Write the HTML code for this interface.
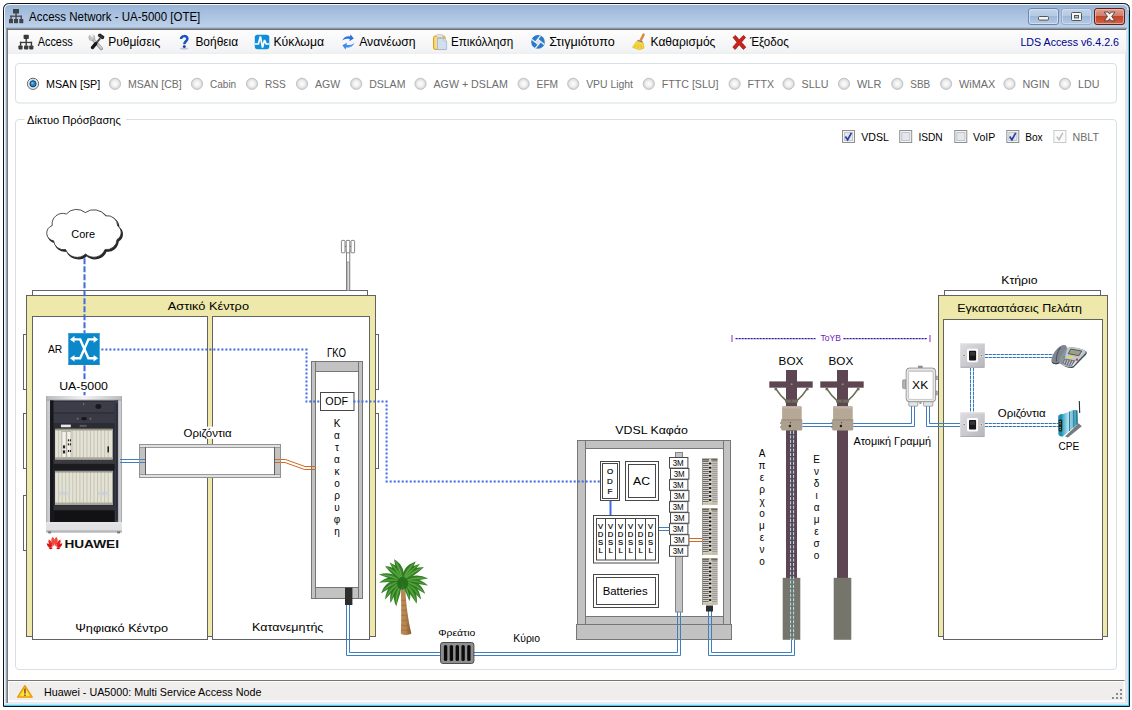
<!DOCTYPE html>
<html><head><meta charset="utf-8"><title>Access Network - UA-5000 [OTE]</title>
<style>
html,body{margin:0;padding:0;background:#fff;overflow:hidden}
body{width:1132px;height:710px;font-family:"Liberation Sans",sans-serif}
svg{display:block;position:absolute;left:0;top:0}
svg text{font-family:"Liberation Sans",sans-serif}
</style></head><body>
<svg width="1132" height="710" viewBox="0 0 1132 710">
<defs>
<linearGradient id="gTitle" x1="0" y1="0" x2="0" y2="1">
<stop offset="0" stop-color="#9ab6d8"/><stop offset="0.035" stop-color="#bdd2ea"/><stop offset="1" stop-color="#bdd2ea"/>
</linearGradient>
<linearGradient id="gTb" gradientUnits="userSpaceOnUse" x1="0" y1="4" x2="0" y2="29">
<stop offset="0" stop-color="#99b4d6"/><stop offset="1" stop-color="#bfd4ec"/>
</linearGradient>
<linearGradient id="gBtn" x1="0" y1="0" x2="0" y2="1">
<stop offset="0" stop-color="#c3d5ea"/><stop offset="0.48" stop-color="#b3c9e3"/><stop offset="0.5" stop-color="#9db8d8"/><stop offset="1" stop-color="#b5cce6"/>
</linearGradient>
<linearGradient id="gClose" x1="0" y1="0" x2="0" y2="1">
<stop offset="0" stop-color="#e3a394"/><stop offset="0.48" stop-color="#d17b68"/><stop offset="0.5" stop-color="#c1432a"/><stop offset="1" stop-color="#d0674c"/>
</linearGradient>
<linearGradient id="gMenu" x1="0" y1="0" x2="0" y2="1">
<stop offset="0" stop-color="#fdfdfd"/><stop offset="1" stop-color="#f1f2f4"/>
</linearGradient>
<radialGradient id="gRadio" cx="0.5" cy="0.5" r="0.5">
<stop offset="0" stop-color="#ffffff"/><stop offset="0.6" stop-color="#ececec"/><stop offset="1" stop-color="#cfcfcf"/>
</radialGradient>
<linearGradient id="gPlate" x1="0" y1="0" x2="1" y2="1">
<stop offset="0" stop-color="#dedee2"/><stop offset="0.5" stop-color="#cbcbd0"/><stop offset="1" stop-color="#b4b4ba"/>
</linearGradient>
<linearGradient id="gTrunk" x1="0" y1="0" x2="1" y2="0">
<stop offset="0" stop-color="#b98a58"/><stop offset="0.45" stop-color="#b5844f"/><stop offset="1" stop-color="#86562e"/>
</linearGradient>
<linearGradient id="gCpe" x1="0" y1="0" x2="1" y2="0">
<stop offset="0" stop-color="#3aa7c6"/><stop offset="0.35" stop-color="#b4e2ef"/><stop offset="1" stop-color="#2a97b8"/>
</linearGradient>
<filter id="fSoft" x="-10%" y="-10%" width="120%" height="120%"><feGaussianBlur stdDeviation="0.45"/></filter>
<linearGradient id="gCap" x1="0" y1="0" x2="1" y2="0"><stop offset="0" stop-color="#b9bcc0"/><stop offset="0.5" stop-color="#f4f4f4"/><stop offset="1" stop-color="#b9bcc0"/></linearGradient>
<filter id="fSoft2" x="-10%" y="-10%" width="120%" height="120%"><feGaussianBlur stdDeviation="0.25"/></filter>
</defs>

<!-- window frame -->
<path d="M3.5 706.5 V9.5 Q3.5 3.5 9.5 3.5 H1123.5 Q1129.5 3.5 1129.5 9.5 V706.5 Z" fill="url(#gTb)" stroke="#111" stroke-width="1"/>
<path d="M4.5 29 V10 Q4.5 4.5 10 4.5 H1122 Q1128 4.5 1128 10" fill="none" stroke="#f2f7fd" stroke-width="1"/>
<rect x="4" y="29" width="1.6" height="677" fill="#f4f8fd"/>
<rect x="5.6" y="29" width="1" height="677" fill="#a9c5ea"/>
<rect x="1126" y="29" width="2" height="677" fill="#dbe4f6"/>
<rect x="1128" y="14" width="1" height="692" fill="#45d2f7"/>
<rect x="4" y="704.6" width="1125" height="1.4" fill="#45d2f7"/>
<rect x="4" y="702.6" width="1124" height="2" fill="#e6ecf8"/>
<rect x="6" y="27.6" width="1121" height="1.4" fill="#8a98a9"/>
<rect x="6.5" y="28" width="1.5" height="675" fill="#7b7b7b"/>
<rect x="7" y="29" width="1119" height="1" fill="#6e6e6e"/>
<rect x="8" y="30" width="1118" height="673" fill="#ffffff"/>
<rect x="1125" y="30" width="1" height="673" fill="#e3e3e3"/>
<rect x="8" y="702" width="1118" height="1" fill="#e9e9e9"/>
<!-- title icon -->
<g fill="#3f4449">
<rect x="13" y="9" width="6" height="4.5"/><rect x="9" y="19" width="4" height="4.2"/><rect x="14" y="19" width="4" height="4.2"/><rect x="19.3" y="19" width="4" height="4.2"/>
<rect x="15.4" y="13" width="1.3" height="6"/><rect x="10.4" y="15.6" width="11.5" height="1.2"/><rect x="10.4" y="15.6" width="1.3" height="4"/><rect x="20.6" y="15.6" width="1.3" height="4"/>
</g>
<text x="29.0" y="20.7" font-size="12" fill="#000" textLength="171.3" lengthAdjust="spacingAndGlyphs">Access Network - UA-5000 [OTE]</text>

<g>
<rect x="1028.5" y="8.5" width="30" height="16" rx="2.5" fill="url(#gBtn)" stroke="#6f87a6"/>
<rect x="1029.5" y="9.5" width="28" height="14" rx="2" fill="none" stroke="#d7e4f3" stroke-opacity=".8"/>
<rect x="1038.5" y="16.5" width="10" height="3.6" rx="1" fill="#f4f4f4" stroke="#555" stroke-width="1"/>
<rect x="1061.5" y="8.5" width="30" height="16" rx="2.5" fill="url(#gBtn)" stroke="#8aa0bd" stroke-opacity=".7"/>
<rect x="1062.5" y="9.5" width="28" height="14" rx="2" fill="none" stroke="#d7e4f3" stroke-opacity=".6"/>
<rect x="1071.5" y="12.5" width="10" height="8" rx="1" fill="#f4f4f4" stroke="#555" stroke-width="1"/>
<rect x="1074.5" y="15.5" width="4" height="2.4" fill="#b7c9df" stroke="#555" stroke-width="1"/>
<rect x="1094.5" y="8.5" width="30" height="16" rx="2.5" fill="url(#gClose)" stroke="#5f2218"/>
<rect x="1095.5" y="9.5" width="28" height="14" rx="2" fill="none" stroke="#f0c0b4" stroke-opacity=".7"/>
<path d="M1104.2 12.1 H1108.2 L1109.6 14.1 L1111 12.1 H1115 L1111.7 16.4 L1115 20.8 H1111 L1109.6 18.7 L1108.2 20.8 H1104.2 L1107.5 16.4 Z" fill="#f7f7f7" stroke="#4d3c3c" stroke-width=".9" stroke-linejoin="round"/>
</g>
<rect x="8" y="30" width="1118" height="22.6" fill="url(#gMenu)"/>
<rect x="8" y="52.6" width="1118" height="1" fill="#e3e5e8"/>
<g fill="#3b3b3b">
<rect x="23.6" y="34.8" width="5.2" height="4.2" rx=".8"/><rect x="18.4" y="45.4" width="4.2" height="4" rx=".8"/><rect x="24" y="45.4" width="4.4" height="4" rx=".8"/><rect x="29.2" y="45.4" width="4.2" height="4" rx=".8"/>
<rect x="25.5" y="38.6" width="1.4" height="7"/><rect x="19.9" y="41.8" width="12.2" height="1.3"/><rect x="19.9" y="41.8" width="1.4" height="4"/><rect x="30.7" y="41.8" width="1.4" height="4"/>
</g>
<text x="37.7" y="45.8" font-size="12" fill="#000" textLength="35.1" lengthAdjust="spacingAndGlyphs">Access</text>
<g>
<path d="M93.2 39.6 L101.4 48.6" stroke="#8f8f8f" stroke-width="3.2" stroke-linecap="round"/>
<path d="M93 39.2 L101.2 48.2" stroke="#c9c9c9" stroke-width="2" stroke-linecap="round"/>
<circle cx="91.8" cy="37.6" r="3" fill="#c4c4c4" stroke="#9a9a9a" stroke-width=".6"/>
<path d="M89.2 34.4 L92.2 37.4 L93.8 35.8 L91.6 33.4 Z" fill="#f6f6f6"/>
<path d="M99.8 38.8 L95.6 43.8" stroke="#4a4a4a" stroke-width="1.9" stroke-linecap="round"/>
<path d="M95.8 43.6 L92.4 47.6" stroke="#151515" stroke-width="3.2" stroke-linecap="round"/>
<path d="M98.4 34 L100.2 33.6 L104.4 36.6 L103.8 38.8 L102 39.2 L97.8 36 Z" fill="#1e1e1e"/>
<path d="M98.6 34.6 L103.2 38" stroke="#5a5a5a" stroke-width=".7"/>
</g>
<text x="108.2" y="45.8" font-size="12" fill="#000" textLength="52.0" lengthAdjust="spacingAndGlyphs">Ρυθμίσεις</text>
<g><ellipse cx="184.2" cy="48.6" rx="4.2" ry="1.1" fill="#8fa3c2" opacity=".55"/>
<path d="M181 39 C180.8 35.4 187.6 35 187.4 38.8 C187.2 41.2 184.4 41.4 184.3 44.2" fill="none" stroke="#1b52c0" stroke-width="2.5" stroke-linecap="butt"/>
<circle cx="184.3" cy="46.6" r="1.45" fill="#143c9c"/></g>
<text x="195.4" y="45.8" font-size="12" fill="#000" textLength="42.8" lengthAdjust="spacingAndGlyphs">Βοήθεια</text>
<g><rect x="254.8" y="34.7" width="14.5" height="14.5" rx="2.6" fill="#0e8fd9"/>
<clipPath id="cCirc"><rect x="254.8" y="34.7" width="14.5" height="14.5" rx="2.6"/></clipPath><path clip-path="url(#cCirc)" d="M254.8 44 H258.4 L260.4 36.4 L262.5 47.6 L264.5 40 L266.2 44 H269.3" fill="none" stroke="#fff" stroke-width="1.7" stroke-linejoin="miter" stroke-miterlimit="3"/></g>
<text x="273.4" y="45.8" font-size="12" fill="#000" textLength="50.7" lengthAdjust="spacingAndGlyphs">Κύκλωμα</text>
<g>
<path d="M342.2 40.6 C343.6 37 347 35.8 350.2 36.4 L350.4 34.2 L353.8 38.6 L349.4 41.2 L349.8 39 C347 38.4 344.4 39 342.2 40.6 Z" fill="#2c6fe0"/>
<path d="M354 43.2 C352.6 46.8 349.2 48 346 47.4 L345.6 49.8 L342.4 45.2 L347 42.8 L346.6 45 C349.2 45.4 351.8 44.8 354 43.2 Z" fill="#3f8af0"/>
<path d="M353.6 43.6 C352.4 46 350.4 46.8 348.6 47" stroke="#6cb4fa" stroke-width="1" fill="none"/>
</g>
<text x="359.2" y="45.8" font-size="12" fill="#000" textLength="56.4" lengthAdjust="spacingAndGlyphs">Ανανέωση</text>
<g><rect x="433.5" y="36" width="11.6" height="13.4" rx="1.6" fill="#f3c53c" stroke="#d49a1c" stroke-width=".9"/>
<rect x="434.4" y="36.8" width="3" height="11.8" fill="#fbe28a" opacity=".8"/>
<rect x="436.4" y="34.6" width="6.6" height="3" rx="1.2" fill="#e3e3e3" stroke="#b5b5b5" stroke-width=".6"/>
<path d="M437.5 38.4 H444 L446.6 41 V49.6 H437.5 Z" fill="#cfdef0" stroke="#9db4d2" stroke-width=".8"/>
<path d="M444 38.4 V41 H446.6" fill="#eef4fb" stroke="#9db4d2" stroke-width=".6"/></g>
<text x="451.0" y="45.8" font-size="12" fill="#000" textLength="62.3" lengthAdjust="spacingAndGlyphs">Επικόλληση</text>
<g><clipPath id="cSnap"><circle cx="538" cy="41.9" r="6.8"/></clipPath>
<circle cx="538" cy="41.9" r="6.8" fill="#2b7bc9"/>
<g clip-path="url(#cSnap)" transform="rotate(-6 538 41.9)">
<path d="M538 39.2 L540.7 41.9 L538 44.6 L535.3 41.9 Z" fill="#c2e2fb"/>
<path d="M535.3 41.9 L544.5 32.7 M538 39.2 L547.2 48.4 M540.7 41.9 L531.5 51.1 M538 44.6 L528.8 35.4" stroke="#f1f1f1" stroke-width="1.25" fill="none"/>
</g></g>
<text x="549.2" y="45.8" font-size="12" fill="#000" textLength="65.5" lengthAdjust="spacingAndGlyphs">Στιγμιότυπο</text>
<g><path d="M643.6 34.6 L640.2 41.4" stroke="#cf9140" stroke-width="2.5" stroke-linecap="round"/>
<path d="M637.8 40.2 L642.6 41.8 C643.6 44 644 46 644 48.2 L639.4 49.8 L632.6 47.4 C634 44.6 635.8 42.2 637.8 40.2 Z" fill="#f3d63e" stroke="#d9b628" stroke-width=".6"/>
<path d="M636 45 l-1.4 2.6 M638.6 44.4 l-.8 4 M641 45 l.2 3.8" stroke="#d9b628" stroke-width=".6"/>
<path d="M637.6 40.4 L642.6 42" stroke="#8a63b8" stroke-width="1.1"/></g>
<text x="650.5" y="45.8" font-size="12" fill="#000" textLength="64.9" lengthAdjust="spacingAndGlyphs">Καθαρισμός</text>
<path d="M733 37.4 L735.4 35.4 L739.2 39.8 L743.4 35.4 L745.6 37.4 L741.4 42.2 L745.8 47.2 L743.4 49.4 L739.2 44.8 L735.2 49.4 L732.8 47.2 L737 42.2 Z" fill="#c9231b" stroke="#8e130f" stroke-width=".7"/>
<text x="749.9" y="45.8" font-size="12" fill="#000" textLength="38.9" lengthAdjust="spacingAndGlyphs">Έξοδος</text>
<text x="1020.4" y="45.6" font-size="11" fill="#00008b" textLength="98.6" lengthAdjust="spacingAndGlyphs">LDS Access v6.4.2.6</text>
<rect x="15.5" y="63.5" width="1101" height="39.5" rx="3.5" fill="none" stroke="#d5dfe5"/>
<path d="M24.5 119.5 H19 Q15.5 119.5 15.5 123 V666 Q15.5 669.5 19 669.5 H1113 Q1116.5 669.5 1116.5 666 V123 Q1116.5 119.5 1113 119.5 H126" fill="none" stroke="#d5dfe5"/>
<text x="27.1" y="123.7" font-size="11" fill="#000" textLength="93.7" lengthAdjust="spacingAndGlyphs">Δίκτυο Πρόσβασης</text>
<circle cx="33" cy="83.8" r="5.6" fill="#fdfdfd" stroke="#5c6670" stroke-width="1"/><circle cx="33" cy="83.8" r="4.4" fill="#f1f3f5" stroke="#c3c9d0" stroke-width=".6"/><circle cx="33" cy="83.8" r="3.1" fill="#1f86d2" stroke="#17395c" stroke-width="1"/><circle cx="32.4" cy="83.1" r="1.2" fill="#62c4f4"/>
<text x="46.0" y="88.2" font-size="11" fill="#000" textLength="54.2" lengthAdjust="spacingAndGlyphs">MSAN [SP]</text>
<circle cx="115" cy="83.8" r="5.6" fill="url(#gRadio)" stroke="#c2c5c8" stroke-width="1"/>
<text x="128.0" y="88.2" font-size="11" fill="#6d6d6d" textLength="53.8" lengthAdjust="spacingAndGlyphs">MSAN [CB]</text>
<circle cx="197" cy="83.8" r="5.6" fill="url(#gRadio)" stroke="#c2c5c8" stroke-width="1"/>
<text x="210.0" y="88.2" font-size="11" fill="#6d6d6d" textLength="26.2" lengthAdjust="spacingAndGlyphs">Cabin</text>
<circle cx="252" cy="83.8" r="5.6" fill="url(#gRadio)" stroke="#c2c5c8" stroke-width="1"/>
<text x="265.0" y="88.2" font-size="11" fill="#6d6d6d" textLength="20.8" lengthAdjust="spacingAndGlyphs">RSS</text>
<circle cx="302" cy="83.8" r="5.6" fill="url(#gRadio)" stroke="#c2c5c8" stroke-width="1"/>
<text x="315.0" y="88.2" font-size="11" fill="#6d6d6d" textLength="25.2" lengthAdjust="spacingAndGlyphs">AGW</text>
<circle cx="356.2" cy="83.8" r="5.6" fill="url(#gRadio)" stroke="#c2c5c8" stroke-width="1"/>
<text x="369.2" y="88.2" font-size="11" fill="#6d6d6d" textLength="36.2" lengthAdjust="spacingAndGlyphs">DSLAM</text>
<circle cx="420.5" cy="83.8" r="5.6" fill="url(#gRadio)" stroke="#c2c5c8" stroke-width="1"/>
<text x="433.5" y="88.2" font-size="11" fill="#6d6d6d" textLength="74.3" lengthAdjust="spacingAndGlyphs">AGW + DSLAM</text>
<circle cx="523.6" cy="83.8" r="5.6" fill="url(#gRadio)" stroke="#c2c5c8" stroke-width="1"/>
<text x="536.6" y="88.2" font-size="11" fill="#6d6d6d" textLength="21.5" lengthAdjust="spacingAndGlyphs">EFM</text>
<circle cx="573.2" cy="83.8" r="5.6" fill="url(#gRadio)" stroke="#c2c5c8" stroke-width="1"/>
<text x="586.2" y="88.2" font-size="11" fill="#6d6d6d" textLength="46.8" lengthAdjust="spacingAndGlyphs">VPU Light</text>
<circle cx="648.8" cy="83.8" r="5.6" fill="url(#gRadio)" stroke="#c2c5c8" stroke-width="1"/>
<text x="661.8" y="88.2" font-size="11" fill="#6d6d6d" textLength="56.7" lengthAdjust="spacingAndGlyphs">FTTC [SLU]</text>
<circle cx="734.6" cy="83.8" r="5.6" fill="url(#gRadio)" stroke="#c2c5c8" stroke-width="1"/>
<text x="747.6" y="88.2" font-size="11" fill="#6d6d6d" textLength="26.5" lengthAdjust="spacingAndGlyphs">FTTX</text>
<circle cx="788.6" cy="83.8" r="5.6" fill="url(#gRadio)" stroke="#c2c5c8" stroke-width="1"/>
<text x="801.6" y="88.2" font-size="11" fill="#6d6d6d" textLength="26.8" lengthAdjust="spacingAndGlyphs">SLLU</text>
<circle cx="844" cy="83.8" r="5.6" fill="url(#gRadio)" stroke="#c2c5c8" stroke-width="1"/>
<text x="857.0" y="88.2" font-size="11" fill="#6d6d6d" textLength="24.3" lengthAdjust="spacingAndGlyphs">WLR</text>
<circle cx="897.3" cy="83.8" r="5.6" fill="url(#gRadio)" stroke="#c2c5c8" stroke-width="1"/>
<text x="910.3" y="88.2" font-size="11" fill="#6d6d6d" textLength="19.9" lengthAdjust="spacingAndGlyphs">SBB</text>
<circle cx="946.1" cy="83.8" r="5.6" fill="url(#gRadio)" stroke="#c2c5c8" stroke-width="1"/>
<text x="959.1" y="88.2" font-size="11" fill="#6d6d6d" textLength="36.3" lengthAdjust="spacingAndGlyphs">WiMAX</text>
<circle cx="1009.5" cy="83.8" r="5.6" fill="url(#gRadio)" stroke="#c2c5c8" stroke-width="1"/>
<text x="1022.5" y="88.2" font-size="11" fill="#6d6d6d" textLength="26.9" lengthAdjust="spacingAndGlyphs">NGIN</text>
<circle cx="1065" cy="83.8" r="5.6" fill="url(#gRadio)" stroke="#c2c5c8" stroke-width="1"/>
<text x="1078.0" y="88.2" font-size="11" fill="#6d6d6d" textLength="21.4" lengthAdjust="spacingAndGlyphs">LDU</text>
<rect x="842.5" y="130.5" width="12" height="12" fill="#f4f4f4" stroke="#8e8f8f"/><rect x="844.5" y="132.5" width="8" height="8" fill="#e3e6ea" stroke="#c1c6cc"/>
<path d="M845.4 136.6 l2.2 3.2 l3.8 -7" fill="none" stroke="#2a3fa0" stroke-width="1.7"/>
<text x="861.3" y="141.0" font-size="11" fill="#000" textLength="27.7" lengthAdjust="spacingAndGlyphs">VDSL</text>
<rect x="899.7" y="130.5" width="12" height="12" fill="#f4f4f4" stroke="#8e8f8f"/><rect x="901.7" y="132.5" width="8" height="8" fill="#e3e6ea" stroke="#c1c6cc"/>
<text x="918.4" y="141.0" font-size="11" fill="#000" textLength="24.3" lengthAdjust="spacingAndGlyphs">ISDN</text>
<rect x="954.8" y="130.5" width="12" height="12" fill="#f4f4f4" stroke="#8e8f8f"/><rect x="956.8" y="132.5" width="8" height="8" fill="#e3e6ea" stroke="#c1c6cc"/>
<text x="973.0" y="141.0" font-size="11" fill="#000" textLength="22.3" lengthAdjust="spacingAndGlyphs">VoIP</text>
<rect x="1006.8" y="130.5" width="12" height="12" fill="#f4f4f4" stroke="#8e8f8f"/><rect x="1008.8" y="132.5" width="8" height="8" fill="#e3e6ea" stroke="#c1c6cc"/>
<path d="M1009.6999999999999 136.6 l2.2 3.2 l3.8 -7" fill="none" stroke="#2a3fa0" stroke-width="1.7"/>
<text x="1025.2" y="141.0" font-size="11" fill="#000" textLength="17.5" lengthAdjust="spacingAndGlyphs">Box</text>
<rect x="1053.9" y="130.5" width="12" height="12" fill="#fafafa" stroke="#c9cacb"/>
<path d="M1056.8000000000002 136.6 l2.2 3.2 l3.8 -7" fill="none" stroke="#b9bdc2" stroke-width="1.5"/>
<text x="1072.6" y="141.0" font-size="11" fill="#6d6d6d" textLength="26.4" lengthAdjust="spacingAndGlyphs">NBLT</text>
<rect x="8" y="680" width="1116.5" height="1" fill="#767676"/>
<rect x="9" y="682" width="1114.5" height="18.4" fill="#f0eded"/>
<path d="M24.9 685.6 L32.2 697.2 H17.6 Z" fill="#f7c61c" stroke="#ec9a0c" stroke-width="1.3" stroke-linejoin="round"/>
<path d="M24.9 688 L29.6 695.8 H20.2 Z" fill="#fdee5a" opacity=".8"/>
<rect x="24.2" y="688.6" width="1.5" height="5" fill="#7a4a1a"/><rect x="24.2" y="694.4" width="1.5" height="1.5" fill="#7a4a1a"/>
<g fill="#8b8b8b"><rect x="1120" y="689" width="2" height="2"/><rect x="1116" y="693" width="2" height="2"/><rect x="1120" y="693" width="2" height="2"/><rect x="1112" y="697" width="2" height="2"/><rect x="1116" y="697" width="2" height="2"/><rect x="1120" y="697" width="2" height="2"/></g>
<text x="44.0" y="696.0" font-size="11" fill="#000" textLength="217.4" lengthAdjust="spacingAndGlyphs">Huawei - UA5000: Multi Service Access Node</text>

<!-- central office -->
<rect x="32.5" y="290.5" width="335" height="6" fill="#fff" stroke="#626262"/>
<g fill="#fff" stroke="#626262">
<rect x="23.5" y="334.5" width="3" height="55"/><rect x="23.5" y="413.5" width="3" height="55"/><rect x="23.5" y="495.5" width="3" height="55"/>
<rect x="375.5" y="334.5" width="3" height="55"/><rect x="375.5" y="413.5" width="3" height="55"/>
</g>
<rect x="26.5" y="295.5" width="349" height="341" fill="#eee8aa" stroke="#626262"/>
<rect x="32.5" y="316.5" width="175" height="323" fill="#fff" stroke="#626262"/>
<rect x="212.5" y="316.5" width="157" height="323" fill="#fff" stroke="#626262"/>
<text x="167.8" y="309.5" font-size="11" fill="#000" textLength="81.2" lengthAdjust="spacingAndGlyphs">Αστικό Κέντρο</text>
<text x="75.2" y="632.0" font-size="11" fill="#000" textLength="92.8" lengthAdjust="spacingAndGlyphs">Ψηφιακό Κέντρο</text>
<text x="252.0" y="631.0" font-size="11" fill="#000" textLength="71.4" lengthAdjust="spacingAndGlyphs">Κατανεμητής</text>
<g fill="#fff" stroke="#666" stroke-width=".8">
<rect x="346.4" y="250" width="3.4" height="40.5"/><rect x="347.2" y="262" width="1.8" height="28.5" stroke-width=".5"/>
<rect x="341.4" y="240.4" width="3.6" height="12.4" rx=".8"/><rect x="346.2" y="240.4" width="3.6" height="12.4" rx=".8"/><rect x="351" y="240.4" width="3.6" height="12.4" rx=".8"/>
<path d="M345 246.5 h1.2 M349.8 246.5 h1.2" />
</g>
<g>
<path d="M85.3 212.6 A14.5 14.5 0 0 1 105.7 215.8 A10.4 10.4 0 0 1 117.7 226 A8 8 0 0 1 117 239.6 A10.4 10.4 0 0 1 105 249.5 A12 12 0 0 1 85.6 254 A12.4 12.4 0 0 1 65.6 249.5 A10 10 0 0 1 53.6 240.8 A7.8 7.8 0 0 1 52.2 225.6 A10.6 10.6 0 0 1 66.3 214 A13.6 13.6 0 0 1 85.3 212.6 Z" fill="#000" stroke="#000" stroke-width="1.2" opacity=".85" transform="translate(1.2,1.5)"/>
<path d="M85.3 212.6 A14.5 14.5 0 0 1 105.7 215.8 A10.4 10.4 0 0 1 117.7 226 A8 8 0 0 1 117 239.6 A10.4 10.4 0 0 1 105 249.5 A12 12 0 0 1 85.6 254 A12.4 12.4 0 0 1 65.6 249.5 A10 10 0 0 1 53.6 240.8 A7.8 7.8 0 0 1 52.2 225.6 A10.6 10.6 0 0 1 66.3 214 A13.6 13.6 0 0 1 85.3 212.6 Z" fill="#fff" stroke="#3a3a3a" stroke-width=".9"/>
</g>
<text x="71.3" y="238.0" font-size="10" fill="#000" textLength="23.7" lengthAdjust="spacingAndGlyphs">Core</text>
<path d="M84.5 258.3 V333 M84.5 365.3 V396" stroke="#4169e1" stroke-width="2" stroke-dasharray="6 2" fill="none"/>
<rect x="57" y="379.6" width="54" height="12.4" fill="#fff"/>
<g>
<rect x="68.3" y="333" width="31.4" height="31.7" fill="#0a88c9"/>
<rect x="68.3" y="333" width="31.4" height="1" fill="#2f9fd8"/><rect x="68.3" y="363.7" width="31.4" height="1" fill="#0a7ab6"/>
<g fill="none" stroke="#fff" stroke-width="2.4" stroke-linejoin="miter">
<path d="M73.6 339.4 H80.2 L88.4 358.2 H94.6"/>
<path d="M73.6 358.2 H80.2 L88.4 339.4 H94.6"/>
</g>
<g fill="#fff"><path d="M69.9 339.4 l4.6 -3.3 v6.6z M69.9 358.2 l4.6 -3.3 v6.6z M98.2 339.4 l-4.6 -3.3 v6.6z M98.2 358.2 l-4.6 -3.3 v6.6z"/></g>
</g>
<text x="48.0" y="353.0" font-size="10" fill="#000" textLength="14.3" lengthAdjust="spacingAndGlyphs">AR</text>
<text x="59.2" y="390.0" font-size="11" fill="#000" textLength="48.8" lengthAdjust="spacingAndGlyphs">UA-5000</text>
<g transform="translate(46.2,396) scale(0.9844,1.0074) translate(-46,-397)">
<rect x="46" y="397" width="77" height="136" fill="#c9ccd0"/>
<rect x="46" y="397" width="77" height="4.2" fill="url(#gCap)"/><rect x="46" y="400.6" width="77" height=".8" fill="#9a9a9a"/>
<rect x="46" y="397" width="1" height="126" fill="#aaa"/><rect x="122" y="397" width="1" height="126" fill="#aaa"/>
<rect x="50" y="401.4" width="69" height="121" fill="#2b2c35"/>
<rect x="50" y="401.4" width="3.4" height="121" fill="#15151a"/><rect x="115.6" y="401.4" width="3.4" height="121" fill="#3c3f4c"/>
<g fill="#1a1a1d"><rect x="50.6" y="404" width="1.6" height="116" opacity=".5"/><rect x="116.8" y="404" width="1.6" height="116" opacity=".5"/></g>
<rect x="53.5" y="402.6" width="62" height="10.6" fill="#3c3d49"/><ellipse cx="99" cy="407.4" rx="3" ry="2.4" fill="#17171c"/><circle cx="84" cy="405" r=".8" fill="#888"/>
<rect x="53.5" y="414.4" width="62" height="9.4" fill="#393a46"/><rect x="82" y="418" width="5" height="3" fill="#18181c"/><circle cx="78" cy="419.5" r=".9" fill="#777"/><circle cx="91" cy="419.5" r=".9" fill="#777"/>
<rect x="53.5" y="424.8" width="62" height="4" fill="#2c2c33"/><rect x="61" y="425.4" width="10" height="2.6" fill="#e8e8e8"/><rect x="80" y="425.6" width="7" height="2.2" fill="#55555c"/>
<rect x="55" y="429.6" width="58.5" height="30.4" fill="#e4e2d4"/>
<g stroke="#b9b7a6" stroke-width=".7"><path d="M58.6 429.6v30.4M62.2 429.6v30.4M65.8 429.6v30.4M69.4 429.6v30.4M73 429.6v30.4M76.6 429.6v30.4M80.2 429.6v30.4M83.8 429.6v30.4M87.4 429.6v30.4M91 429.6v30.4M94.6 429.6v30.4M98.2 429.6v30.4M101.8 429.6v30.4M105.4 429.6v30.4M109 429.6v30.4"/></g>
<rect x="62" y="432" width="4.2" height="26" fill="#f3f2ea" stroke="#8e8c7e" stroke-width=".5"/><rect x="67" y="432" width="4.2" height="26" fill="#f3f2ea" stroke="#8e8c7e" stroke-width=".5"/>
<g fill="#222"><rect x="63" y="446" width="2.2" height="3"/><rect x="63" y="451" width="2.2" height="3"/><rect x="68" y="440" width="1.2" height="2"/><rect x="70" y="440" width="1.2" height="2"/><rect x="68" y="444" width="1.2" height="2"/><rect x="70" y="444" width="1.2" height="2"/><rect x="68" y="450.6" width="1.2" height="2"/><rect x="70" y="450.6" width="1.2" height="2"/><rect x="108.2" y="447" width="1.6" height="6"/></g>
<rect x="55" y="429.6" width="58.5" height="1.6" fill="#9a988c"/><rect x="55" y="457.8" width="58.5" height="2.2" fill="#a9a79a"/>
<rect x="53.5" y="460.6" width="62" height="3.6" fill="#3a3a40"/><rect x="53.5" y="464.6" width="62" height="5.8" fill="#1b1b1f"/>
<rect x="55" y="471.4" width="58.5" height="33.8" fill="#e4e2d4"/>
<g stroke="#b9b7a6" stroke-width=".7"><path d="M58.6 471.4v33.8M62.2 471.4v33.8M65.8 471.4v33.8M69.4 471.4v33.8M73 471.4v33.8M76.6 471.4v33.8M80.2 471.4v33.8M83.8 471.4v33.8M87.4 471.4v33.8M91 471.4v33.8M94.6 471.4v33.8M98.2 471.4v33.8M101.8 471.4v33.8M105.4 471.4v33.8M109 471.4v33.8"/></g>
<g fill="#c9d3e6"><rect x="59.4" y="492" width="2" height="3.4"/><rect x="63" y="492" width="2" height="3.4"/><rect x="66.6" y="492" width="2" height="3.4"/><rect x="99" y="492" width="2" height="3.4"/><rect x="102.6" y="492" width="2" height="3.4"/><rect x="106.2" y="492" width="2" height="3.4"/></g>
<rect x="55" y="471.4" width="58.5" height="1.6" fill="#9a988c"/><rect x="55" y="502.8" width="58.5" height="2.4" fill="#a9a79a"/>
<rect x="53.5" y="506" width="62" height="4" fill="#34343a"/><rect x="53.5" y="510.6" width="62" height="11.4" fill="#121215"/>
<rect x="46" y="522.4" width="77" height="9" fill="#e1e1e3"/><rect x="46" y="522.4" width="77" height="1" fill="#f0f0f0"/><rect x="46" y="530.6" width="77" height=".9" fill="#9c9c9c"/>
<rect x="48" y="531.4" width="3" height="2" fill="#777"/><rect x="118" y="531.4" width="3" height="2" fill="#777"/>
</g>
<g filter="url(#fSoft2)">
<path d="M53.90 546.20 Q56.45 540.62 52.70 536.80 Q49.03 541.57 53.90 546.20Z" fill="#f2483a"/><path d="M55.10 546.20 Q59.97 541.57 56.30 536.80 Q52.55 540.62 55.10 546.20Z" fill="#f2483a"/><path d="M52.90 546.80 Q52.76 541.50 48.70 539.40 Q47.21 544.65 52.90 546.80Z" fill="#ee2020"/><path d="M56.10 546.80 Q61.79 544.65 60.30 539.40 Q56.24 541.50 56.10 546.80Z" fill="#ee2020"/><path d="M52.30 547.50 Q50.41 543.68 46.80 543.20 Q47.03 548.01 52.30 547.50Z" fill="#dc1010"/><path d="M56.70 547.50 Q61.97 548.01 62.20 543.20 Q58.59 543.68 56.70 547.50Z" fill="#dc1010"/><path d="M52.70 548.30 Q50.50 546.82 48.40 547.70 Q50.01 550.31 52.70 548.30Z" fill="#bb0d0d"/><path d="M56.30 548.30 Q58.99 550.31 60.60 547.70 Q58.50 546.82 56.30 548.30Z" fill="#bb0d0d"/>
</g>
<text x="64.4" y="547.8" font-size="10.6" fill="#111" textLength="54.6" lengthAdjust="spacingAndGlyphs" font-weight="bold">HUAWEI</text>
<g>
<path d="M120 459.5 H146 M120 462.5 H146" stroke="#3f7fbf" stroke-width="1" fill="none"/>
<path d="M275 459.5 H285.5 L305 466.5 H315 M275 462.5 H285 L304.5 469.5 H315" stroke="#d2691e" stroke-width="1" fill="none"/>
<rect x="139.5" y="444.5" width="141" height="33" fill="#e0e0e0" stroke="#929292"/>
<rect x="140" y="447.5" width="5.5" height="27" fill="#c2c2c2"/><rect x="274.5" y="447.5" width="5.5" height="27" fill="#c2c2c2"/>
<rect x="145.5" y="447.5" width="129" height="27" fill="#fff" stroke="#9a9a9a"/>
<path d="M140 447.5 H145.5 M274.5 447.5 H280 M140 474.5 H145.5 M274.5 474.5 H280" stroke="#9a9a9a" fill="none"/>
<path d="M145.5 447 V475 M274.5 447 V475" stroke="#5e5e5e" stroke-width="1"/>
<path d="M140 459.5 H145 M140 462.5 H145" stroke="#3f7fbf" stroke-width="1" fill="none"/>
<path d="M275 459.5 H280 M275 462.5 H280" stroke="#d2691e" stroke-width="1" fill="none"/>
</g>
<rect x="181" y="426.6" width="54" height="12.2" fill="#fff"/>
<text x="183.5" y="437.0" font-size="10" fill="#000" textLength="48.1" lengthAdjust="spacingAndGlyphs">Οριζόντια</text>
<g>
<rect x="311.5" y="361.5" width="51" height="237" fill="#c2c2c2" stroke="#767676"/>
<rect x="315.5" y="371.5" width="43" height="216" fill="#fff" stroke="#767676"/>
<path d="M315.5 361.5 V371.5 M358.5 361.5 V371.5 M315.5 587.5 V598.5 M358.5 587.5 V598.5" stroke="#767676" fill="none"/>
<rect x="320.5" y="392.5" width="33.5" height="18" fill="#fff" stroke="#484848"/>
<rect x="345" y="587.6" width="7.4" height="17.4" fill="#2d2d2d"/>
<path d="M311.5 466.5 H316 M311.5 469.5 H316" stroke="#d2691e" stroke-width="1"/>
</g>
<path d="M101.4 349.5 H306.5 V401.6 H320 M353.5 401.6 H386.6 V481.4 H600" stroke="#4169e1" stroke-width="2" stroke-dasharray="2 2" fill="none"/>
<text x="327.0" y="357.2" font-size="12.5" fill="#000" textLength="19.0" lengthAdjust="spacingAndGlyphs">ΓΚΟ</text>
<text x="325.3" y="405.0" font-size="10" fill="#000" textLength="22.7" lengthAdjust="spacingAndGlyphs">ODF</text>
<text x="337.0" y="427.0" font-size="10" fill="#000" text-anchor="middle">Κ</text>
<text x="337.0" y="439.0" font-size="10" fill="#000" text-anchor="middle">α</text>
<text x="337.0" y="451.0" font-size="10" fill="#000" text-anchor="middle">τ</text>
<text x="337.0" y="463.0" font-size="10" fill="#000" text-anchor="middle">α</text>
<text x="337.0" y="475.0" font-size="10" fill="#000" text-anchor="middle">κ</text>
<text x="337.0" y="487.0" font-size="10" fill="#000" text-anchor="middle">ο</text>
<text x="337.0" y="499.0" font-size="10" fill="#000" text-anchor="middle">ρ</text>
<text x="337.0" y="511.0" font-size="10" fill="#000" text-anchor="middle">υ</text>
<text x="337.0" y="523.0" font-size="10" fill="#000" text-anchor="middle">φ</text>
<text x="337.0" y="535.0" font-size="10" fill="#000" text-anchor="middle">η</text>
<path d="M346.5 605 V655.5 H680.5 V612 M349.5 605 V652.5 H677.5 V612" stroke="#3f7fbf" stroke-width="1" fill="none"/>
<path d="M708.5 611 V655.5 H794.5 V640 M711.5 611 V652.5 H791.5 V640" stroke="#3f7fbf" stroke-width="1" fill="none"/>
<g>
<path d="M400.8 590 C401.4 606 401.4 622 400.8 633.4 C403 635.4 409 635.6 411.4 633.6 C409 624 406.2 608 405.4 590 Z" fill="url(#gTrunk)"/>
<g stroke="#8a5c34" stroke-width=".6" opacity=".75" fill="none"><path d="M400.8 600 q2.5 1 5.2 0 M401 605 q2.6 1 5.4 0 M401 610 q2.8 1 5.8 0 M401 615 q3 1 6.4 0 M401 620 q3.4 1 7.2 0 M401 625 q3.8 1.1 8.2 0 M401 630 q4.4 1.1 9.6 0"/></g>
<g filter="url(#fSoft)">
<path d="M402.4 581.5 Q407.1 567.1 394.2 559.2 Q395.1 571.5 402.4 581.5Z" fill="#26731b" opacity="0.95"/>
<path d="M402.4 581.5 Q411.8 573.3 415.6 561.4 Q401.1 566.3 402.4 581.5Z" fill="#26731b" opacity="0.95"/>
<path d="M402.4 581.5 Q400.2 566.7 385.2 566.2 Q392.2 575.6 402.4 581.5Z" fill="#26731b" opacity="0.95"/>
<path d="M402.4 581.5 Q414.4 576.3 423.8 567.2 Q407.8 566.4 402.4 581.5Z" fill="#26731b" opacity="0.95"/>
<path d="M402.4 581.5 Q393.1 569.9 379.0 574.4 Q390.2 579.5 402.4 581.5Z" fill="#26731b" opacity="0.95"/>
<path d="M402.4 581.5 Q415.4 581.3 428.0 578.4 Q414.2 571.4 402.4 581.5Z" fill="#26731b" opacity="0.95"/>
<path d="M402.4 581.5 Q390.4 572.9 379.2 582.6 Q390.8 582.0 402.4 581.5Z" fill="#26731b" opacity="0.95"/>
<path d="M402.4 581.5 Q415.1 583.4 427.8 585.6 Q416.6 574.3 402.4 581.5Z" fill="#26731b" opacity="0.95"/>
<path d="M402.4 581.5 Q386.3 577.4 381.2 593.2 Q391.5 586.8 402.4 581.5Z" fill="#26731b" opacity="0.95"/>
<path d="M402.4 581.5 Q414.1 587.1 425.2 593.8 Q419.2 577.6 402.4 581.5Z" fill="#26731b" opacity="0.95"/>
<path d="M402.4 581.5 Q386.0 583.1 385.2 599.6 Q393.2 590.0 402.4 581.5Z" fill="#26731b" opacity="0.95"/>
<path d="M402.4 581.5 Q389.0 591.3 396.2 606.2 Q400.7 594.2 402.4 581.5Z" fill="#26731b" opacity="0.95"/>
<path d="M402.4 581.5 Q408.8 593.0 416.6 603.6 Q418.9 586.5 402.4 581.5Z" fill="#26731b" opacity="0.95"/>
<path d="M402.4 581.5 Q404.6 591.7 409.5 601.0 Q412.9 588.7 402.4 581.5Z" fill="#26731b" opacity="0.95"/>
<path d="M402.4 581.5 Q412.4 589.7 421.0 599.4 Q419.1 582.8 402.4 581.5Z" fill="#26731b" opacity="0.95"/>
<path d="M402.4 581.5 Q402.8 567.4 389.6 562.4 Q394.5 573.0 402.4 581.5Z" fill="#26731b" opacity="0.95"/>
<path d="M402.4 581.5 Q412.4 574.0 419.8 564.0 Q405.3 567.0 402.4 581.5Z" fill="#26731b" opacity="0.95"/>
<path d="M402.4 581.5 Q387.7 587.4 390.6 603.0 Q395.8 591.9 402.4 581.5Z" fill="#26731b" opacity="0.95"/>
<path d="M402.4 581.5 Q403.8 568.3 394.2 559.2 Q397.8 570.5 402.4 581.5Z" fill="#46982c" opacity="0.8"/>
<path d="M402.4 581.5 Q409.4 571.7 415.6 561.4 Q404.1 568.2 402.4 581.5Z" fill="#46982c" opacity="0.8"/>
<path d="M402.4 581.5 Q397.9 569.2 385.2 566.2 Q394.0 573.7 402.4 581.5Z" fill="#46982c" opacity="0.8"/>
<path d="M402.4 581.5 Q413.0 574.2 423.8 567.2 Q409.6 569.2 402.4 581.5Z" fill="#46982c" opacity="0.8"/>
<path d="M402.4 581.5 Q392.3 572.6 379.0 574.4 Q390.9 577.4 402.4 581.5Z" fill="#46982c" opacity="0.8"/>
<path d="M402.4 581.5 Q415.1 579.2 428.0 578.4 Q414.5 574.3 402.4 581.5Z" fill="#46982c" opacity="0.8"/>
<path d="M402.4 581.5 Q390.5 575.6 379.2 582.6 Q390.7 580.2 402.4 581.5Z" fill="#46982c" opacity="0.8"/>
<path d="M402.4 581.5 Q415.4 581.6 427.8 585.6 Q416.2 577.0 402.4 581.5Z" fill="#46982c" opacity="0.8"/>
<path d="M402.4 581.5 Q387.9 580.3 381.2 593.2 Q390.5 585.0 402.4 581.5Z" fill="#46982c" opacity="0.8"/>
<path d="M402.4 581.5 Q415.1 585.3 425.2 593.8 Q417.6 580.5 402.4 581.5Z" fill="#46982c" opacity="0.8"/>
<path d="M402.4 581.5 Q388.2 585.2 385.2 599.6 Q391.8 588.7 402.4 581.5Z" fill="#46982c" opacity="0.8"/>
<path d="M402.4 581.5 Q392.4 592.1 396.2 606.2 Q398.2 593.6 402.4 581.5Z" fill="#46982c" opacity="0.8"/>
<path d="M402.4 581.5 Q410.9 591.6 416.6 603.6 Q416.0 588.4 402.4 581.5Z" fill="#46982c" opacity="0.8"/>
<path d="M402.4 581.5 Q406.4 591.1 409.5 601.0 Q410.6 589.6 402.4 581.5Z" fill="#46982c" opacity="0.8"/>
<path d="M402.4 581.5 Q413.7 588.4 421.0 599.4 Q417.0 585.0 402.4 581.5Z" fill="#46982c" opacity="0.8"/>
<path d="M402.4 581.5 Q400.5 569.0 389.6 562.4 Q396.3 571.7 402.4 581.5Z" fill="#46982c" opacity="0.8"/>
<path d="M402.4 581.5 Q410.8 572.5 419.8 564.0 Q407.3 569.0 402.4 581.5Z" fill="#46982c" opacity="0.8"/>
<path d="M402.4 581.5 Q390.2 588.8 390.6 603.0 Q394.3 591.0 402.4 581.5Z" fill="#46982c" opacity="0.8"/>
<path d="M402.4 581.5 Q401.6 569.2 394.2 559.2 Q400.1 569.7 402.4 581.5Z" fill="#b9dba0" opacity="0.4"/>
<path d="M402.4 581.5 Q407.4 570.4 415.6 561.4 Q406.1 569.5 402.4 581.5Z" fill="#b9dba0" opacity="0.4"/>
<path d="M402.4 581.5 Q396.4 570.9 385.2 566.2 Q395.5 572.0 402.4 581.5Z" fill="#b9dba0" opacity="0.4"/>
<path d="M402.4 581.5 Q411.7 572.3 423.8 567.2 Q410.9 571.1 402.4 581.5Z" fill="#b9dba0" opacity="0.4"/>
<path d="M402.4 581.5 Q391.8 574.4 379.0 574.4 Q391.4 575.6 402.4 581.5Z" fill="#b9dba0" opacity="0.4"/>
<path d="M402.4 581.5 Q414.9 577.3 428.0 578.4 Q414.7 576.1 402.4 581.5Z" fill="#b9dba0" opacity="0.4"/>
<path d="M402.4 581.5 Q390.6 577.4 379.2 582.6 Q390.6 578.5 402.4 581.5Z" fill="#b9dba0" opacity="0.4"/>
<path d="M402.4 581.5 Q415.7 579.8 427.8 585.6 Q415.9 578.7 402.4 581.5Z" fill="#b9dba0" opacity="0.4"/>
<path d="M402.4 581.5 Q388.9 582.1 381.2 593.2 Q389.5 583.2 402.4 581.5Z" fill="#b9dba0" opacity="0.4"/>
<path d="M402.4 581.5 Q416.1 583.5 425.2 593.8 Q416.7 582.3 402.4 581.5Z" fill="#b9dba0" opacity="0.4"/>
<path d="M402.4 581.5 Q389.6 586.5 385.2 599.6 Q390.5 587.4 402.4 581.5Z" fill="#b9dba0" opacity="0.4"/>
<path d="M402.4 581.5 Q394.6 592.7 396.2 606.2 Q396.0 593.0 402.4 581.5Z" fill="#b9dba0" opacity="0.4"/>
<path d="M402.4 581.5 Q412.8 590.4 416.6 603.6 Q414.0 589.6 402.4 581.5Z" fill="#b9dba0" opacity="0.4"/>
<path d="M402.4 581.5 Q408.0 590.5 409.5 601.0 Q409.0 590.1 402.4 581.5Z" fill="#b9dba0" opacity="0.4"/>
<path d="M402.4 581.5 Q414.9 587.1 421.0 599.4 Q415.7 586.3 402.4 581.5Z" fill="#b9dba0" opacity="0.4"/>
<path d="M402.4 581.5 Q398.9 570.0 389.6 562.4 Q397.9 570.7 402.4 581.5Z" fill="#b9dba0" opacity="0.4"/>
<path d="M402.4 581.5 Q409.5 571.1 419.8 564.0 Q408.6 570.3 402.4 581.5Z" fill="#b9dba0" opacity="0.4"/>
<path d="M402.4 581.5 Q391.8 589.6 390.6 603.0 Q392.7 590.2 402.4 581.5Z" fill="#b9dba0" opacity="0.4"/>
<ellipse cx="402.6" cy="583.4" rx="5.6" ry="6.6" fill="#256f1d" opacity=".95"/>
</g>
</g>
<g>
<rect x="440.5" y="642.5" width="33.4" height="21" rx="2.4" fill="#8f8f8f" stroke="#4d4d4d"/>
<g fill="#0c0c0c"><rect x="443.9" y="645" width="3.4" height="16" rx="1.6"/><rect x="449.7" y="645" width="3.4" height="16" rx="1.6"/><rect x="455.6" y="645" width="3.4" height="16" rx="1.6"/><rect x="461.4" y="645" width="3.4" height="16" rx="1.6"/><rect x="467.2" y="645" width="3.4" height="16" rx="1.6"/></g>
</g>
<text x="438.2" y="635.6" font-size="9.5" fill="#000" textLength="37.1" lengthAdjust="spacingAndGlyphs">Φρεάτιο</text>
<text x="513.3" y="641.8" font-size="10" fill="#000" textLength="26.7" lengthAdjust="spacingAndGlyphs">Κύριο</text>
<g>
<rect x="577.5" y="440.5" width="153" height="184" fill="#c2c2c2" stroke="#767676"/>
<rect x="585.5" y="448.5" width="138" height="168" fill="#fff" stroke="#767676"/>
<path d="M585.5 440.5 V448.5 M723.5 440.5 V448.5 M585.5 616.5 V624.5 M723.5 616.5 V624.5" stroke="#767676" fill="none"/>
<rect x="576.5" y="624.5" width="155" height="15" fill="#c2c2c2" stroke="#767676"/>
</g>
<text x="615.3" y="433.6" font-size="11" fill="#000" textLength="72.5" lengthAdjust="spacingAndGlyphs">VDSL Καφάο</text>
<path d="M677.5 612 V640 M680.5 612 V640 M708.5 611 V640 M711.5 611 V640" stroke="#3f7fbf" stroke-width="1" fill="none"/>
<path d="M577.7 481.4 H600" stroke="#4169e1" stroke-width="2" stroke-dasharray="2 2" fill="none"/>
<g fill="#fff" stroke="#484848" stroke-width="1">
<rect x="600.5" y="461.5" width="19" height="39"/><rect x="602.5" y="463.5" width="15" height="35"/>
<rect x="625.5" y="461.5" width="33" height="39"/><rect x="628.5" y="464.5" width="27" height="33"/>
<rect x="593.5" y="515.5" width="65" height="47.5"/><rect x="596.5" y="518.5" width="59" height="41.5"/>
<path d="M605.5 518.5 V560 M615.5 518.5 V560 M625.5 518.5 V560 M635.5 518.5 V560 M645.5 518.5 V560" fill="none"/>
<rect x="593.5" y="574.5" width="65" height="33"/><rect x="596.5" y="577.5" width="59" height="27"/>
</g>
<text x="610.0" y="473.8" font-size="8" fill="#000" text-anchor="middle" stroke="#000" stroke-width=".2">O</text>
<text x="610.0" y="483.8" font-size="8" fill="#000" text-anchor="middle" stroke="#000" stroke-width=".2">D</text>
<text x="610.0" y="493.8" font-size="8" fill="#000" text-anchor="middle" stroke="#000" stroke-width=".2">F</text>
<text x="633.0" y="484.6" font-size="11" fill="#000" textLength="17.0" lengthAdjust="spacingAndGlyphs">AC</text>
<path d="M610.5 501 V515" stroke="#4169e1" stroke-width="2"/>
<text x="600.6" y="528.6" font-size="7.6" fill="#000" text-anchor="middle" stroke="#000" stroke-width=".2">V</text>
<text x="600.6" y="536.8" font-size="7.6" fill="#000" text-anchor="middle" stroke="#000" stroke-width=".2">D</text>
<text x="600.6" y="545.0" font-size="7.6" fill="#000" text-anchor="middle" stroke="#000" stroke-width=".2">S</text>
<text x="600.6" y="552.8" font-size="7.6" fill="#000" text-anchor="middle" stroke="#000" stroke-width=".2">L</text>
<text x="610.6" y="528.6" font-size="7.6" fill="#000" text-anchor="middle" stroke="#000" stroke-width=".2">V</text>
<text x="610.6" y="536.8" font-size="7.6" fill="#000" text-anchor="middle" stroke="#000" stroke-width=".2">D</text>
<text x="610.6" y="545.0" font-size="7.6" fill="#000" text-anchor="middle" stroke="#000" stroke-width=".2">S</text>
<text x="610.6" y="552.8" font-size="7.6" fill="#000" text-anchor="middle" stroke="#000" stroke-width=".2">L</text>
<text x="620.6" y="528.6" font-size="7.6" fill="#000" text-anchor="middle" stroke="#000" stroke-width=".2">V</text>
<text x="620.6" y="536.8" font-size="7.6" fill="#000" text-anchor="middle" stroke="#000" stroke-width=".2">D</text>
<text x="620.6" y="545.0" font-size="7.6" fill="#000" text-anchor="middle" stroke="#000" stroke-width=".2">S</text>
<text x="620.6" y="552.8" font-size="7.6" fill="#000" text-anchor="middle" stroke="#000" stroke-width=".2">L</text>
<text x="630.6" y="528.6" font-size="7.6" fill="#000" text-anchor="middle" stroke="#000" stroke-width=".2">V</text>
<text x="630.6" y="536.8" font-size="7.6" fill="#000" text-anchor="middle" stroke="#000" stroke-width=".2">D</text>
<text x="630.6" y="545.0" font-size="7.6" fill="#000" text-anchor="middle" stroke="#000" stroke-width=".2">S</text>
<text x="630.6" y="552.8" font-size="7.6" fill="#000" text-anchor="middle" stroke="#000" stroke-width=".2">L</text>
<text x="640.6" y="528.6" font-size="7.6" fill="#000" text-anchor="middle" stroke="#000" stroke-width=".2">V</text>
<text x="640.6" y="536.8" font-size="7.6" fill="#000" text-anchor="middle" stroke="#000" stroke-width=".2">D</text>
<text x="640.6" y="545.0" font-size="7.6" fill="#000" text-anchor="middle" stroke="#000" stroke-width=".2">S</text>
<text x="640.6" y="552.8" font-size="7.6" fill="#000" text-anchor="middle" stroke="#000" stroke-width=".2">L</text>
<text x="650.6" y="528.6" font-size="7.6" fill="#000" text-anchor="middle" stroke="#000" stroke-width=".2">V</text>
<text x="650.6" y="536.8" font-size="7.6" fill="#000" text-anchor="middle" stroke="#000" stroke-width=".2">D</text>
<text x="650.6" y="545.0" font-size="7.6" fill="#000" text-anchor="middle" stroke="#000" stroke-width=".2">S</text>
<text x="650.6" y="552.8" font-size="7.6" fill="#000" text-anchor="middle" stroke="#000" stroke-width=".2">L</text>
<text x="602.7" y="595.0" font-size="10" fill="#000" textLength="44.9" lengthAdjust="spacingAndGlyphs">Batteries</text>
<rect x="675.5" y="452.5" width="7" height="159.5" fill="#c4c4c4" stroke="#858585"/>
<rect x="669.5" y="457.5" width="18.4" height="10.6" fill="#fff" stroke="#4a4a4a"/><text x="672.7" y="465.7" font-size="8.6" fill="#000" textLength="11.0" lengthAdjust="spacingAndGlyphs">3M</text>
<rect x="670.5" y="468.5" width="18.4" height="10.6" fill="#fff" stroke="#4a4a4a"/><text x="673.7" y="476.7" font-size="8.6" fill="#000" textLength="11.0" lengthAdjust="spacingAndGlyphs">3M</text>
<rect x="669.5" y="479.6" width="18.4" height="10.6" fill="#fff" stroke="#4a4a4a"/><text x="672.7" y="487.8" font-size="8.6" fill="#000" textLength="11.0" lengthAdjust="spacingAndGlyphs">3M</text>
<rect x="670.5" y="490.6" width="18.4" height="10.6" fill="#fff" stroke="#4a4a4a"/><text x="673.7" y="498.8" font-size="8.6" fill="#000" textLength="11.0" lengthAdjust="spacingAndGlyphs">3M</text>
<rect x="669.5" y="501.6" width="18.4" height="10.6" fill="#fff" stroke="#4a4a4a"/><text x="672.7" y="509.8" font-size="8.6" fill="#000" textLength="11.0" lengthAdjust="spacingAndGlyphs">3M</text>
<rect x="670.5" y="512.6" width="18.4" height="10.6" fill="#fff" stroke="#4a4a4a"/><text x="673.7" y="520.9" font-size="8.6" fill="#000" textLength="11.0" lengthAdjust="spacingAndGlyphs">3M</text>
<rect x="669.5" y="523.7" width="18.4" height="10.6" fill="#fff" stroke="#4a4a4a"/><text x="672.7" y="531.9" font-size="8.6" fill="#000" textLength="11.0" lengthAdjust="spacingAndGlyphs">3M</text>
<rect x="670.5" y="534.7" width="18.4" height="10.6" fill="#fff" stroke="#4a4a4a"/><text x="673.7" y="542.9" font-size="8.6" fill="#000" textLength="11.0" lengthAdjust="spacingAndGlyphs">3M</text>
<rect x="669.5" y="545.7" width="18.4" height="10.6" fill="#fff" stroke="#4a4a4a"/><text x="672.7" y="553.9" font-size="8.6" fill="#000" textLength="11.0" lengthAdjust="spacingAndGlyphs">3M</text>
<path d="M659 527.5 H669.5 M659 530.5 H669.5" stroke="#3f7fbf" stroke-width="1"/>
<path d="M689 538.5 H702 M689 541.5 H702" stroke="#d2691e" stroke-width="1"/>
<g><rect x="702" y="458.6" width="15.6" height="46.39999999999998" fill="#d2d0ca"/><rect x="711.8" y="458.6" width="5.8" height="46.39999999999998" fill="#c4c1ba"/><rect x="702" y="458.6" width="1" height="46.39999999999998" fill="#9a978f"/><rect x="703" y="461" width="5.6" height="1" fill="#6f6d68"/><rect x="712.2" y="461" width="5" height="1" fill="#9f9c94"/><rect x="703" y="463" width="5.6" height="1" fill="#6f6d68"/><rect x="712.2" y="463" width="5" height="1" fill="#9f9c94"/><rect x="703" y="465" width="5.6" height="1" fill="#6f6d68"/><rect x="712.2" y="465" width="5" height="1" fill="#9f9c94"/><rect x="703" y="467" width="5.6" height="1" fill="#6f6d68"/><rect x="712.2" y="467" width="5" height="1" fill="#9f9c94"/><rect x="703" y="469" width="5.6" height="1" fill="#6f6d68"/><rect x="712.2" y="469" width="5" height="1" fill="#9f9c94"/><rect x="703" y="471" width="5.6" height="1" fill="#6f6d68"/><rect x="712.2" y="471" width="5" height="1" fill="#9f9c94"/><rect x="703" y="473" width="5.6" height="1" fill="#6f6d68"/><rect x="712.2" y="473" width="5" height="1" fill="#9f9c94"/><rect x="703" y="475" width="5.6" height="1" fill="#6f6d68"/><rect x="712.2" y="475" width="5" height="1" fill="#9f9c94"/><rect x="703" y="477" width="5.6" height="1" fill="#6f6d68"/><rect x="712.2" y="477" width="5" height="1" fill="#9f9c94"/><rect x="703" y="479" width="5.6" height="1" fill="#6f6d68"/><rect x="712.2" y="479" width="5" height="1" fill="#9f9c94"/><rect x="703" y="481" width="5.6" height="1" fill="#6f6d68"/><rect x="712.2" y="481" width="5" height="1" fill="#9f9c94"/><rect x="703" y="483" width="5.6" height="1" fill="#6f6d68"/><rect x="712.2" y="483" width="5" height="1" fill="#9f9c94"/><rect x="703" y="485" width="5.6" height="1" fill="#6f6d68"/><rect x="712.2" y="485" width="5" height="1" fill="#9f9c94"/><rect x="703" y="487" width="5.6" height="1" fill="#6f6d68"/><rect x="712.2" y="487" width="5" height="1" fill="#9f9c94"/><rect x="703" y="489" width="5.6" height="1" fill="#6f6d68"/><rect x="712.2" y="489" width="5" height="1" fill="#9f9c94"/><rect x="703" y="491" width="5.6" height="1" fill="#6f6d68"/><rect x="712.2" y="491" width="5" height="1" fill="#9f9c94"/><rect x="703" y="493" width="5.6" height="1" fill="#6f6d68"/><rect x="712.2" y="493" width="5" height="1" fill="#9f9c94"/><rect x="703" y="495" width="5.6" height="1" fill="#6f6d68"/><rect x="712.2" y="495" width="5" height="1" fill="#9f9c94"/><rect x="703" y="497" width="5.6" height="1" fill="#6f6d68"/><rect x="712.2" y="497" width="5" height="1" fill="#9f9c94"/><rect x="703" y="499" width="5.6" height="1" fill="#6f6d68"/><rect x="712.2" y="499" width="5" height="1" fill="#9f9c94"/><rect x="703" y="501" width="5.6" height="1" fill="#6f6d68"/><rect x="712.2" y="501" width="5" height="1" fill="#9f9c94"/><ellipse cx="710.1" cy="463.6" rx="1.35" ry="1" fill="#111"/><ellipse cx="710.1" cy="467.7" rx="1.35" ry="1" fill="#111"/><ellipse cx="710.1" cy="471.7" rx="1.35" ry="1" fill="#111"/><ellipse cx="710.1" cy="475.8" rx="1.35" ry="1" fill="#111"/><ellipse cx="710.1" cy="479.8" rx="1.35" ry="1" fill="#111"/><ellipse cx="710.1" cy="483.9" rx="1.35" ry="1" fill="#111"/><ellipse cx="710.1" cy="487.9" rx="1.35" ry="1" fill="#111"/><ellipse cx="710.1" cy="492.0" rx="1.35" ry="1" fill="#111"/><ellipse cx="710.1" cy="496.0" rx="1.35" ry="1" fill="#111"/><ellipse cx="710.1" cy="500.1" rx="1.35" ry="1" fill="#111"/><rect x="702.4" y="458.6" width="15" height="2" fill="#6a6752"/><rect x="709" y="458.6" width="2.2" height="2.4" fill="#cfccc3"/><rect x="703" y="503" width="13.6" height="1.4" fill="#cdbd8c" opacity=".8"/></g>
<g><rect x="702" y="508.4" width="15.6" height="46.60000000000002" fill="#d2d0ca"/><rect x="711.8" y="508.4" width="5.8" height="46.60000000000002" fill="#c4c1ba"/><rect x="702" y="508.4" width="1" height="46.60000000000002" fill="#9a978f"/><rect x="703" y="511" width="5.6" height="1" fill="#6f6d68"/><rect x="712.2" y="511" width="5" height="1" fill="#9f9c94"/><rect x="703" y="513" width="5.6" height="1" fill="#6f6d68"/><rect x="712.2" y="513" width="5" height="1" fill="#9f9c94"/><rect x="703" y="515" width="5.6" height="1" fill="#6f6d68"/><rect x="712.2" y="515" width="5" height="1" fill="#9f9c94"/><rect x="703" y="517" width="5.6" height="1" fill="#6f6d68"/><rect x="712.2" y="517" width="5" height="1" fill="#9f9c94"/><rect x="703" y="519" width="5.6" height="1" fill="#6f6d68"/><rect x="712.2" y="519" width="5" height="1" fill="#9f9c94"/><rect x="703" y="521" width="5.6" height="1" fill="#6f6d68"/><rect x="712.2" y="521" width="5" height="1" fill="#9f9c94"/><rect x="703" y="523" width="5.6" height="1" fill="#6f6d68"/><rect x="712.2" y="523" width="5" height="1" fill="#9f9c94"/><rect x="703" y="525" width="5.6" height="1" fill="#6f6d68"/><rect x="712.2" y="525" width="5" height="1" fill="#9f9c94"/><rect x="703" y="527" width="5.6" height="1" fill="#6f6d68"/><rect x="712.2" y="527" width="5" height="1" fill="#9f9c94"/><rect x="703" y="529" width="5.6" height="1" fill="#6f6d68"/><rect x="712.2" y="529" width="5" height="1" fill="#9f9c94"/><rect x="703" y="531" width="5.6" height="1" fill="#6f6d68"/><rect x="712.2" y="531" width="5" height="1" fill="#9f9c94"/><rect x="703" y="533" width="5.6" height="1" fill="#6f6d68"/><rect x="712.2" y="533" width="5" height="1" fill="#9f9c94"/><rect x="703" y="535" width="5.6" height="1" fill="#6f6d68"/><rect x="712.2" y="535" width="5" height="1" fill="#9f9c94"/><rect x="703" y="537" width="5.6" height="1" fill="#6f6d68"/><rect x="712.2" y="537" width="5" height="1" fill="#9f9c94"/><rect x="703" y="539" width="5.6" height="1" fill="#6f6d68"/><rect x="712.2" y="539" width="5" height="1" fill="#9f9c94"/><rect x="703" y="541" width="5.6" height="1" fill="#6f6d68"/><rect x="712.2" y="541" width="5" height="1" fill="#9f9c94"/><rect x="703" y="543" width="5.6" height="1" fill="#6f6d68"/><rect x="712.2" y="543" width="5" height="1" fill="#9f9c94"/><rect x="703" y="545" width="5.6" height="1" fill="#6f6d68"/><rect x="712.2" y="545" width="5" height="1" fill="#9f9c94"/><rect x="703" y="547" width="5.6" height="1" fill="#6f6d68"/><rect x="712.2" y="547" width="5" height="1" fill="#9f9c94"/><rect x="703" y="549" width="5.6" height="1" fill="#6f6d68"/><rect x="712.2" y="549" width="5" height="1" fill="#9f9c94"/><rect x="703" y="551" width="5.6" height="1" fill="#6f6d68"/><rect x="712.2" y="551" width="5" height="1" fill="#9f9c94"/><ellipse cx="710.1" cy="513.4" rx="1.35" ry="1" fill="#111"/><ellipse cx="710.1" cy="517.4" rx="1.35" ry="1" fill="#111"/><ellipse cx="710.1" cy="521.5" rx="1.35" ry="1" fill="#111"/><ellipse cx="710.1" cy="525.5" rx="1.35" ry="1" fill="#111"/><ellipse cx="710.1" cy="529.6" rx="1.35" ry="1" fill="#111"/><ellipse cx="710.1" cy="533.6" rx="1.35" ry="1" fill="#111"/><ellipse cx="710.1" cy="537.7" rx="1.35" ry="1" fill="#111"/><ellipse cx="710.1" cy="541.8" rx="1.35" ry="1" fill="#111"/><ellipse cx="710.1" cy="545.8" rx="1.35" ry="1" fill="#111"/><ellipse cx="710.1" cy="549.9" rx="1.35" ry="1" fill="#111"/><rect x="702.4" y="508.4" width="15" height="2" fill="#6a6752"/><rect x="709" y="508.4" width="2.2" height="2.4" fill="#cfccc3"/><rect x="703" y="553" width="13.6" height="1.4" fill="#cdbd8c" opacity=".8"/></g>
<g><rect x="702" y="558.4" width="15.6" height="46.60000000000002" fill="#d2d0ca"/><rect x="711.8" y="558.4" width="5.8" height="46.60000000000002" fill="#c4c1ba"/><rect x="702" y="558.4" width="1" height="46.60000000000002" fill="#9a978f"/><rect x="703" y="561" width="5.6" height="1" fill="#6f6d68"/><rect x="712.2" y="561" width="5" height="1" fill="#9f9c94"/><rect x="703" y="563" width="5.6" height="1" fill="#6f6d68"/><rect x="712.2" y="563" width="5" height="1" fill="#9f9c94"/><rect x="703" y="565" width="5.6" height="1" fill="#6f6d68"/><rect x="712.2" y="565" width="5" height="1" fill="#9f9c94"/><rect x="703" y="567" width="5.6" height="1" fill="#6f6d68"/><rect x="712.2" y="567" width="5" height="1" fill="#9f9c94"/><rect x="703" y="569" width="5.6" height="1" fill="#6f6d68"/><rect x="712.2" y="569" width="5" height="1" fill="#9f9c94"/><rect x="703" y="571" width="5.6" height="1" fill="#6f6d68"/><rect x="712.2" y="571" width="5" height="1" fill="#9f9c94"/><rect x="703" y="573" width="5.6" height="1" fill="#6f6d68"/><rect x="712.2" y="573" width="5" height="1" fill="#9f9c94"/><rect x="703" y="575" width="5.6" height="1" fill="#6f6d68"/><rect x="712.2" y="575" width="5" height="1" fill="#9f9c94"/><rect x="703" y="577" width="5.6" height="1" fill="#6f6d68"/><rect x="712.2" y="577" width="5" height="1" fill="#9f9c94"/><rect x="703" y="579" width="5.6" height="1" fill="#6f6d68"/><rect x="712.2" y="579" width="5" height="1" fill="#9f9c94"/><rect x="703" y="581" width="5.6" height="1" fill="#6f6d68"/><rect x="712.2" y="581" width="5" height="1" fill="#9f9c94"/><rect x="703" y="583" width="5.6" height="1" fill="#6f6d68"/><rect x="712.2" y="583" width="5" height="1" fill="#9f9c94"/><rect x="703" y="585" width="5.6" height="1" fill="#6f6d68"/><rect x="712.2" y="585" width="5" height="1" fill="#9f9c94"/><rect x="703" y="587" width="5.6" height="1" fill="#6f6d68"/><rect x="712.2" y="587" width="5" height="1" fill="#9f9c94"/><rect x="703" y="589" width="5.6" height="1" fill="#6f6d68"/><rect x="712.2" y="589" width="5" height="1" fill="#9f9c94"/><rect x="703" y="591" width="5.6" height="1" fill="#6f6d68"/><rect x="712.2" y="591" width="5" height="1" fill="#9f9c94"/><rect x="703" y="593" width="5.6" height="1" fill="#6f6d68"/><rect x="712.2" y="593" width="5" height="1" fill="#9f9c94"/><rect x="703" y="595" width="5.6" height="1" fill="#6f6d68"/><rect x="712.2" y="595" width="5" height="1" fill="#9f9c94"/><rect x="703" y="597" width="5.6" height="1" fill="#6f6d68"/><rect x="712.2" y="597" width="5" height="1" fill="#9f9c94"/><rect x="703" y="599" width="5.6" height="1" fill="#6f6d68"/><rect x="712.2" y="599" width="5" height="1" fill="#9f9c94"/><rect x="703" y="601" width="5.6" height="1" fill="#6f6d68"/><rect x="712.2" y="601" width="5" height="1" fill="#9f9c94"/><ellipse cx="710.1" cy="563.4" rx="1.35" ry="1" fill="#111"/><ellipse cx="710.1" cy="567.4" rx="1.35" ry="1" fill="#111"/><ellipse cx="710.1" cy="571.5" rx="1.35" ry="1" fill="#111"/><ellipse cx="710.1" cy="575.5" rx="1.35" ry="1" fill="#111"/><ellipse cx="710.1" cy="579.6" rx="1.35" ry="1" fill="#111"/><ellipse cx="710.1" cy="583.6" rx="1.35" ry="1" fill="#111"/><ellipse cx="710.1" cy="587.7" rx="1.35" ry="1" fill="#111"/><ellipse cx="710.1" cy="591.8" rx="1.35" ry="1" fill="#111"/><ellipse cx="710.1" cy="595.8" rx="1.35" ry="1" fill="#111"/><ellipse cx="710.1" cy="599.9" rx="1.35" ry="1" fill="#111"/><rect x="702.4" y="558.4" width="15" height="2" fill="#6a6752"/><rect x="709" y="558.4" width="2.2" height="2.4" fill="#cfccc3"/><rect x="703" y="603" width="13.6" height="1.4" fill="#cdbd8c" opacity=".8"/></g>
<rect x="706" y="605.5" width="7" height="6" fill="#2d2d2d"/>
<g><rect x="786.0" y="370" width="11" height="208" fill="#5d4652"/><rect x="769.3" y="381.4" width="43.4" height="6.3" fill="#5d4652"/><circle cx="791.7" cy="384.3" r="1" fill="#8d8f78"/><path d="M775.7 388.6 Q780.5 396 786.3 400.8 M807.3 388.6 Q802.5 396 796.7 400.8" stroke="#6e6f5b" stroke-width="1.7" fill="none"/><rect x="774.5" y="387.7" width="2.6" height="2.6" fill="#6e6f5b"/><rect x="805.9" y="387.7" width="2.6" height="2.6" fill="#6e6f5b"/><rect x="785.1" y="399.6" width="12.8" height="3" fill="#6e6f5b"/><circle cx="791.5" cy="401.1" r=".8" fill="#5d4652"/><rect x="782.7" y="577.8" width="17.6" height="62" fill="#75756b"/><path d="M790.6 431 V640 M793.6 431 V640" stroke="#aee3f4" stroke-width="1" stroke-dasharray="3 1.4" fill="none"/><rect x="782.1" y="406.2" width="19.6" height="14" rx="1.4" fill="#b5a896"/><rect x="782.1" y="406.2" width="19.6" height="2.4" rx="1.2" fill="#c2b6a6"/><rect x="781.1" y="419.4" width="21.2" height="11.1" rx="1.6" fill="#ac9f8d"/><rect x="781.1" y="419.4" width="21.2" height="1" fill="#95897a"/><rect x="780.3" y="422" width="1" height="2" fill="#8d8274"/><rect x="780.3" y="426" width="1" height="2" fill="#8d8274"/><circle cx="789.9" cy="426" r="1.2" fill="#1c1c1c"/><circle cx="790.5" cy="422.6" r=".55" fill="#333"/></g>
<g><rect x="837.0" y="370" width="11" height="208" fill="#5d4652"/><rect x="820.3" y="381.4" width="43.4" height="6.3" fill="#5d4652"/><circle cx="842.7" cy="384.3" r="1" fill="#8d8f78"/><path d="M826.7 388.6 Q831.5 396 837.3 400.8 M858.3 388.6 Q853.5 396 847.7 400.8" stroke="#6e6f5b" stroke-width="1.7" fill="none"/><rect x="825.5" y="387.7" width="2.6" height="2.6" fill="#6e6f5b"/><rect x="856.9" y="387.7" width="2.6" height="2.6" fill="#6e6f5b"/><rect x="836.1" y="399.6" width="12.8" height="3" fill="#6e6f5b"/><circle cx="842.5" cy="401.1" r=".8" fill="#5d4652"/><rect x="833.7" y="577.8" width="17.6" height="62" fill="#75756b"/><rect x="833.1" y="406.2" width="19.6" height="14" rx="1.4" fill="#b5a896"/><rect x="833.1" y="406.2" width="19.6" height="2.4" rx="1.2" fill="#c2b6a6"/><rect x="832.1" y="419.4" width="21.2" height="11.1" rx="1.6" fill="#ac9f8d"/><rect x="832.1" y="419.4" width="21.2" height="1" fill="#95897a"/><rect x="831.3" y="422" width="1" height="2" fill="#8d8274"/><rect x="831.3" y="426" width="1" height="2" fill="#8d8274"/><circle cx="840.9" cy="426" r="1.2" fill="#1c1c1c"/><circle cx="841.5" cy="422.6" r=".55" fill="#333"/></g>
<path d="M802.4 423.5 H832.4 M802.4 426.5 H832.4 M853.2 423.5 H911.5 V406 M853.2 426.5 H914.5 V406" stroke="#3f7fbf" stroke-width="1" fill="none"/>
<path d="M926.5 406 V426.5 H960 M929.5 406 V423.5 H960" stroke="#3f7fbf" stroke-width="1" fill="none"/>
<text x="778.6" y="365.0" font-size="11" fill="#000" textLength="24.7" lengthAdjust="spacingAndGlyphs">BOX</text>
<text x="828.5" y="365.0" font-size="11" fill="#000" textLength="24.7" lengthAdjust="spacingAndGlyphs">BOX</text>
<text x="762.0" y="457.0" font-size="10" fill="#000" text-anchor="middle">Α</text>
<text x="762.0" y="469.0" font-size="10" fill="#000" text-anchor="middle">π</text>
<text x="762.0" y="481.0" font-size="10" fill="#000" text-anchor="middle">ε</text>
<text x="762.0" y="493.0" font-size="10" fill="#000" text-anchor="middle">ρ</text>
<text x="762.0" y="505.0" font-size="10" fill="#000" text-anchor="middle">χ</text>
<text x="762.0" y="517.0" font-size="10" fill="#000" text-anchor="middle">ο</text>
<text x="762.0" y="529.0" font-size="10" fill="#000" text-anchor="middle">μ</text>
<text x="762.0" y="541.0" font-size="10" fill="#000" text-anchor="middle">ε</text>
<text x="762.0" y="553.0" font-size="10" fill="#000" text-anchor="middle">ν</text>
<text x="762.0" y="565.0" font-size="10" fill="#000" text-anchor="middle">ο</text>
<text x="816.6" y="463.3" font-size="10" fill="#000" text-anchor="middle">Ε</text>
<text x="816.6" y="475.3" font-size="10" fill="#000" text-anchor="middle">ν</text>
<text x="816.6" y="487.3" font-size="10" fill="#000" text-anchor="middle">δ</text>
<text x="816.6" y="499.3" font-size="10" fill="#000" text-anchor="middle">ι</text>
<text x="816.6" y="511.3" font-size="10" fill="#000" text-anchor="middle">α</text>
<text x="816.6" y="523.3" font-size="10" fill="#000" text-anchor="middle">μ</text>
<text x="816.6" y="535.3" font-size="10" fill="#000" text-anchor="middle">ε</text>
<text x="816.6" y="547.3" font-size="10" fill="#000" text-anchor="middle">σ</text>
<text x="816.6" y="559.3" font-size="10" fill="#000" text-anchor="middle">ο</text>
<text x="853.5" y="444.7" font-size="10" fill="#000" textLength="77.5" lengthAdjust="spacingAndGlyphs">Ατομική Γραμμή</text>
<path d="M732 335 V342 M930 335 V342" stroke="#a552c8" stroke-width="1.2"/>
<path d="M735.5 338.6 H815.5 M843.5 338.6 H927" stroke="#3a1c9a" stroke-width="1.1" stroke-dasharray="2.2 .8"/>
<text x="820.6" y="341.2" font-size="9.8" fill="#6d22b8" textLength="20.4" lengthAdjust="spacingAndGlyphs">ToYB</text>
<g>
<rect x="918.4" y="366" width="3.8" height="2.4" fill="#9b9b9b" stroke="#6b6b6b" stroke-width=".5"/>
<rect x="902.6" y="379.8" width="3.6" height="8.8" rx="1" fill="#b4b4b4" stroke="#777" stroke-width=".6"/>
<rect x="935.4" y="376" width="1.8" height="3.8" fill="#a9a9a9" stroke="#777" stroke-width=".5"/><rect x="935.4" y="391" width="1.8" height="4" fill="#a9a9a9" stroke="#777" stroke-width=".5"/>
<rect x="908.8" y="400.6" width="9" height="5.6" rx=".8" fill="#e4e4e4" stroke="#8a8a8a" stroke-width=".7"/><rect x="923.6" y="400.6" width="9.2" height="5.6" rx=".8" fill="#e4e4e4" stroke="#8a8a8a" stroke-width=".7"/>
<rect x="919.4" y="401.4" width="2" height="2.6" fill="#999"/>
<rect x="906.2" y="368.1" width="29.4" height="33.6" rx="3.2" fill="#d6d6d6" stroke="#848484" stroke-width=".9"/>
<rect x="907.2" y="369.2" width="27.4" height="31.4" rx="2.6" fill="none" stroke="#f2f2f2" stroke-width=".9"/>
<rect x="908.6" y="371.4" width="24.4" height="28" rx="1" fill="#fff" stroke="#b9b9b9" stroke-width=".7"/>
</g>
<text x="912.1" y="388.8" font-size="11" fill="#000" textLength="16.1" lengthAdjust="spacingAndGlyphs">XK</text>

<rect x="944.5" y="290.5" width="156" height="6" fill="#fff" stroke="#626262"/>
<rect x="938.5" y="295.5" width="169" height="341" fill="#eee8aa" stroke="#626262"/>
<rect x="943.5" y="319.5" width="159" height="320" fill="#fff" stroke="#626262"/>
<text x="1001.3" y="284.0" font-size="11" fill="#000" textLength="36.2" lengthAdjust="spacingAndGlyphs">Κτήριο</text>
<text x="957.3" y="312.3" font-size="11" fill="#000" textLength="124.6" lengthAdjust="spacingAndGlyphs">Εγκαταστάσεις Πελάτη</text>
<path d="M938 426.5 H960 M938 423.5 H960" stroke="#3f7fbf" stroke-width="1" fill="none"/>
<path d="M985 354.5 H1053.4 M985 357.5 H1053.4 M985 423.5 H1058.4 M985 426.5 H1058.4 M970.5 368 V412.4 M973.5 368 V412.4" stroke="#9cc3e8" stroke-width="1" fill="none"/>
<path d="M985 354.5 H1053.4 M985 357.5 H1053.4 M985 423.5 H1058.4 M985 426.5 H1058.4 M970.5 368 V412.4 M973.5 368 V412.4" stroke="#2f74b8" stroke-width="1" stroke-dasharray="2.8 1.2" fill="none"/>
<g><rect x="960.2" y="343" width="24.6" height="24.8" rx="1.2" fill="url(#gPlate)"/><rect x="960.6" y="343.2" width="23.8" height=".9" fill="#e9e9ec"/><rect x="960.6" y="366.8" width="23.8" height=".9" fill="#a9a9ae"/><rect x="967" y="348.8" width="11" height="13.4" rx="1.4" fill="#fdfdfd"/><rect x="969" y="350.8" width="7.1" height="9.6" rx=".8" fill="#17171a"/><rect x="970" y="352" width="5.1" height="3.6" fill="#34343a"/><circle cx="964.1" cy="355.6" r="1.5" fill="#e9e9ec"/><circle cx="981.4" cy="355.6" r="1.5" fill="#e9e9ec"/><circle cx="964.1" cy="355.6" r=".8" fill="#8a6d2c"/><circle cx="981.4" cy="355.6" r=".8" fill="#8a6d2c"/></g>
<g><rect x="960.2" y="412.2" width="24.6" height="24.8" rx="1.2" fill="url(#gPlate)"/><rect x="960.6" y="412.4" width="23.8" height=".9" fill="#e9e9ec"/><rect x="960.6" y="436.0" width="23.8" height=".9" fill="#a9a9ae"/><rect x="967" y="418.0" width="11" height="13.4" rx="1.4" fill="#fdfdfd"/><rect x="969" y="420.0" width="7.1" height="9.6" rx=".8" fill="#17171a"/><rect x="970" y="421.2" width="5.1" height="3.6" fill="#34343a"/><circle cx="964.1" cy="424.8" r="1.5" fill="#e9e9ec"/><circle cx="981.4" cy="424.8" r="1.5" fill="#e9e9ec"/><circle cx="964.1" cy="424.8" r=".8" fill="#8a6d2c"/><circle cx="981.4" cy="424.8" r=".8" fill="#8a6d2c"/></g>
<g>
<path d="M1062.4 364.8 L1067 348.2 C1072 346.6 1081 348.4 1085.6 351 C1087.4 352 1087 353.6 1086 354.8 L1073.6 367.4 C1071 368.8 1064.6 367.4 1062.4 364.8 Z" fill="#46525e"/>
<path d="M1061.6 364 L1066.6 347.8 C1071.6 346.2 1080.4 347.8 1085 350.4 C1086.2 351.4 1085.8 352.6 1084.8 353.8 L1072.6 366.4 C1069.6 367.6 1063.8 366.4 1061.6 364 Z" fill="#c3c7cf"/>
<path d="M1057 362.6 L1063.4 348 L1067.4 347.6 L1063 365 Z" fill="#8d949c"/>
<path d="M1070.7 349 L1081.7 351 L1078.9 355.7 L1068.2 353.7 Z" fill="#9ba08b" stroke="#3f4640" stroke-width=".8"/>
<path d="M1064.4 358.6 L1076 360.6 L1072.2 365.8 C1069 366.4 1064.6 365.4 1062.6 363.6 Z" fill="#6d747d"/>
<g stroke="#cfd3d9" stroke-width=".9"><path d="M1065.6 359.6 l-1.6 4 M1068 360 l-1.8 4.6 M1070.4 360.4 l-2 5 M1072.8 360.8 l-2.2 5"/></g>
<path d="M1075.6 360.4 L1077.4 360.8 L1073.6 366 L1072 365.6 Z" fill="#e1e4e8"/>
<ellipse cx="1071" cy="357.3" rx="2.5" ry="1.1" fill="#f0e21a"/>
<circle cx="1064" cy="357" r="1" fill="#3fae49"/><circle cx="1076.9" cy="359.7" r="1.1" fill="#cf2e3a"/>
<path d="M1051.4 361.4 C1051 356 1056.6 347.2 1062.4 345.2 C1065.6 344.2 1067.6 346 1066.4 348.4 C1062.4 352.4 1059.6 357.8 1058.8 362.8 C1057 364.6 1052.4 364 1051.4 361.4 Z" fill="#7f868e"/>
<path d="M1060.6 347.4 C1058 350.6 1056.2 355.6 1056.4 361.6" stroke="#4d5963" stroke-width="1.2" fill="none"/>
<path d="M1052 362.4 C1054 364.2 1057.4 364.2 1059 362.6" stroke="#2e353c" stroke-width="1.2" fill="none"/>
</g>
<g>
<path d="M1079.3 401 L1079.7 413" stroke="#2f2f2f" stroke-width="1.1"/>
<path d="M1065 436.4 L1078.6 423.2 L1081.8 426.2 L1068 437.4 Z" fill="#777b80"/>
<path d="M1062.6 414.2 L1072 410.6 C1075 409.8 1077.4 410 1077.6 411 L1078 423.8 L1062.8 436.6 Z" fill="url(#gCpe)"/>
<path d="M1069.5 411.6 L1069.6 431 M1073.7 410.6 L1073.9 427.4 M1076.6 410.4 L1076.9 424.8" stroke="#2a6f86" stroke-width=".9" fill="none"/>
<path d="M1058.2 416.4 C1058.2 415 1061 413.8 1062.8 414.2 V436.6 C1060.6 436.6 1058.4 435.6 1058.4 434 Z" fill="#1b8fb3"/>
<rect x="1058.6" y="419.6" width="3.6" height="11.8" rx=".8" fill="#1c2228"/>
<g fill="#4fd06a"><rect x="1059.4" y="421" width="1.6" height=".9"/><rect x="1059.4" y="423.4" width="1.6" height=".9"/><rect x="1059.4" y="427" width="1.6" height=".9"/><rect x="1059.4" y="429.2" width="1.6" height=".9"/></g>
</g>
<text x="997.8" y="417.0" font-size="10" fill="#000" textLength="47.9" lengthAdjust="spacingAndGlyphs">Οριζόντια</text>
<text x="1058.5" y="449.6" font-size="10" fill="#000" textLength="20.7" lengthAdjust="spacingAndGlyphs">CPE</text>
</svg>
</body></html>
